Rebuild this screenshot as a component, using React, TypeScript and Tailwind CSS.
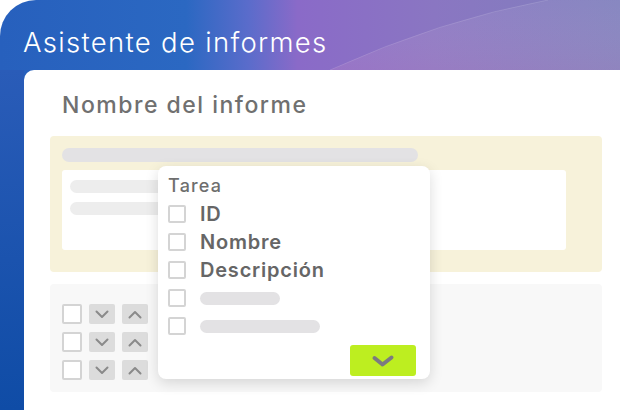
import React from "react";

const Check = () => (
  <div className="w-[18px] h-[18px] border-2 border-[#d4d4d4] rounded-[2px] bg-white shrink-0" />
);

const ChevronDown = () => (
  <svg width="14" height="9" viewBox="0 0 14 9" fill="none">
    <path d="M1.5 1.5 L7 7 L12.5 1.5" stroke="#8a8a8a" strokeWidth="2" strokeLinecap="round" strokeLinejoin="round" />
  </svg>
);
const ChevronUp = () => (
  <svg width="14" height="9" viewBox="0 0 14 9" fill="none">
    <path d="M1.5 7.5 L7 2 L12.5 7.5" stroke="#8a8a8a" strokeWidth="2" strokeLinecap="round" strokeLinejoin="round" />
  </svg>
);

const SortRow = () => (
  <div className="flex items-center gap-[7px] h-[20px]">
    <div className="w-[20px] h-[20px] border-2 border-[#d4d4d4] rounded-[2px] bg-white" />
    <div className="w-[26px] h-[20px] bg-[#dcdcdc] rounded-[2px] flex items-center justify-center"><ChevronDown /></div>
    <div className="w-[26px] h-[20px] bg-[#dcdcdc] rounded-[2px] flex items-center justify-center"><ChevronUp /></div>
  </div>
);

export default function App() {
  return (
    <div className="w-[620px] h-[410px] bg-white overflow-hidden" style={{ fontFamily: 'Inter, "Noto Sans", sans-serif' }}>
      <div className="relative w-full h-full rounded-tl-[36px] overflow-hidden bg-[linear-gradient(90deg,#2760bd_0%,#2b68c2_30%,#5a6ccb_40%,#8a6ac8_48%,#8a76c2_70%,#8080bd_100%)]">
        <svg className="absolute inset-0" width="620" height="70" viewBox="0 0 620 70">
          <defs>
            <linearGradient id="lf" x1="0" y1="0" x2="0" y2="1">
              <stop offset="0" stopColor="#ffffff" stopOpacity="0.06" />
              <stop offset="1" stopColor="#f0a0c8" stopOpacity="0.14" />
            </linearGradient>
          </defs>
          <path d="M330 70 Q 440 20 548 0 L 620 0 L 620 70 Z" fill="url(#lf)" />
          <path d="M330 70 Q 440 20 548 0" stroke="#ffffff" strokeOpacity="0.12" strokeWidth="1" fill="none" />
        </svg>
        <div className="absolute left-0 top-[70px] w-[24px] h-[340px] bg-[linear-gradient(180deg,#2a5cb8,#0f4ca6)]" />
        <div className="relative flex flex-col h-full">
          <div className="h-[70px] flex items-center pl-[23px] pt-[16px]">
            <span className="text-white text-[27.5px] font-light leading-none tracking-[1.3px]">Asistente de informes</span>
          </div>
          <div className="ml-[24px] flex-1 bg-white rounded-tl-[10px] relative pl-[26px] pr-[18px]">
            <div className="pt-[24px] pl-[12px] h-[66px]">
              <span className="text-[#707070] text-[23px] font-medium leading-none tracking-[1.5px]">Nombre del informe</span>
            </div>
            <div className="h-[136px] bg-[#f7f2da] rounded-[4px] pt-[12px] pl-[12px] pr-[36px] flex flex-col">
              <div className="w-[356px] h-[14px] rounded-full bg-[#e3e2e4]" />
              <div className="mt-[8px] h-[80px] bg-white rounded-[3px] pt-[10px] pl-[8px] flex flex-col gap-[9px]">
                <div className="w-[200px] h-[13px] rounded-full bg-[#ededed]" />
                <div className="w-[200px] h-[13px] rounded-full bg-[#ededed]" />
              </div>
            </div>
            <div className="mt-[12px] h-[108px] bg-[#f8f8f8] rounded-[4px] pt-[20px] pl-[12px] flex flex-col gap-[8px]">
              <SortRow />
              <SortRow />
              <SortRow />
            </div>
            <div className="absolute left-[134px] top-[96px] w-[272px] h-[213px] bg-white rounded-[8px] shadow-[0_4px_14px_rgba(0,0,0,0.14)] pl-[10px] pt-[9px]">
              <div className="text-[#6e6e6e] text-[18px] font-medium leading-none h-[22px] flex items-center tracking-[1.2px]">Tarea</div>
              <div className="flex flex-col mt-[3px]">
                {["ID", "Nombre", "Descripción"].map((t) => (
                  <div key={t} className="h-[28px] flex items-center gap-[14px]">
                    <Check />
                    <span className="text-[#666666] text-[20px] font-semibold leading-none tracking-[0.8px]">{t}</span>
                  </div>
                ))}
                <div className="h-[28px] flex items-center gap-[14px]">
                  <Check />
                  <div className="w-[80px] h-[13px] rounded-full bg-[#e3e2e4]" />
                </div>
                <div className="h-[28px] flex items-center gap-[14px]">
                  <Check />
                  <div className="w-[120px] h-[13px] rounded-full bg-[#e3e2e4]" />
                </div>
              </div>
              <div className="flex justify-end pr-[14px] mt-[5px]">
                <div className="w-[66px] h-[31px] bg-[#bdee20] rounded-[3px] flex items-center justify-center">
                  <svg width="24" height="14" viewBox="0 0 24 14" fill="none">
                    <path d="M3.5 4 L11.5 10.5 L20.5 3.5" stroke="#7c7b80" strokeWidth="4" strokeLinecap="round" strokeLinejoin="round" />
                  </svg>
                </div>
              </div>
            </div>
          </div>
        </div>
      </div>
    </div>
  );
}
